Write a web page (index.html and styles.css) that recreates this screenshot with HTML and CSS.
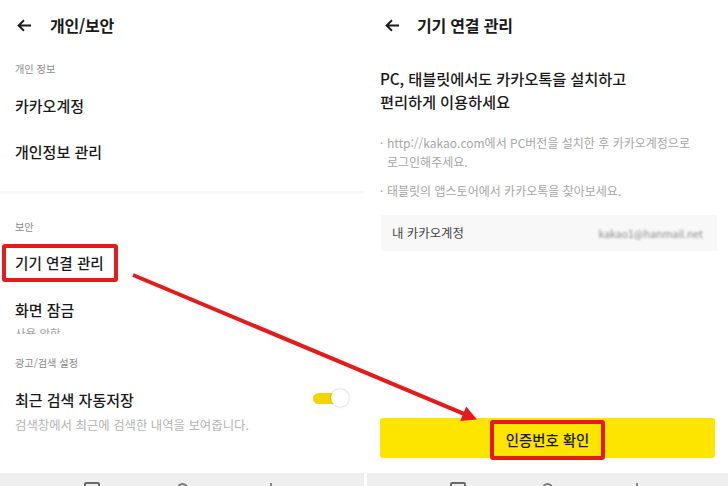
FILE: index.html
```html
<!DOCTYPE html>
<html lang="ko">
<head>
<meta charset="utf-8">
<title>개인/보안 - 기기 연결 관리</title>
<link rel="stylesheet" href="styles.css">
</head>
<body>
<div class="screen">
  <section class="panel panel-left">
    <header class="appbar">
      <svg class="back" viewBox="0 0 15 13" width="15" height="13"><path d="M14 6.5H1.8M7 1.2L1.6 6.5L7 11.8" fill="none" stroke="#1a1a1a" stroke-width="1.9"/></svg>
      <h1 class="title">개인/보안</h1>
    </header>
    <div class="content content-left">
      <p class="label label-first">개인 정보</p>
      <div class="item item-first">카카오계정</div>
      <div class="item">개인정보 관리</div>
      <div class="divider"></div>
      <p class="label label-security">보안</p>
      <div class="item-marked"><span class="mark">기기 연결 관리</span></div>
      <div class="clipped">
        <div class="item-title">화면 잠금</div>
        <div class="item-sub">사용 안함</div>
      </div>
      <p class="label label-ad">광고/검색 설정</p>
      <div class="toggle-row">
        <div class="toggle-text">
          <div class="item-title">최근 검색 자동저장</div>
          <div class="item-desc">검색창에서 최근에 검색한 내역을 보여줍니다.</div>
        </div>
        <span class="switch"><span class="track"></span><span class="knob"></span></span>
      </div>
    </div>
    <nav class="navbar">
      <span class="nav-slot"><span class="nav-recent"></span></span>
      <span class="nav-slot"><span class="nav-home"></span></span>
      <span class="nav-slot"><span class="nav-back"></span></span>
    </nav>
  </section>

  <section class="panel panel-right">
    <header class="appbar appbar-right">
      <svg class="back" viewBox="0 0 15 13" width="15" height="13"><path d="M14 6.5H1.8M7 1.2L1.6 6.5L7 11.8" fill="none" stroke="#1a1a1a" stroke-width="1.9"/></svg>
      <h1 class="title">기기 연결 관리</h1>
    </header>
    <div class="content content-right">
      <p class="headline">PC, 태블릿에서도 카카오톡을 설치하고<br>편리하게 이용하세요</p>
      <ul class="bullets">
        <li><span class="dot">·</span><span>http://kakao.com에서 PC버전을 설치한 후 카카오계정으로 로그인해주세요.</span></li>
        <li><span class="dot">·</span><span>태블릿의 앱스토어에서 카카오톡을 찾아보세요.</span></li>
      </ul>
      <div class="account">
        <span class="account-label">내 카카오계정</span>
        <span class="account-email">kakao1@hanmail.net</span>
      </div>
      <div class="cta"><span class="mark mark-cta">인증번호 확인</span></div>
    </div>
    <nav class="navbar">
      <span class="nav-slot"><span class="nav-recent"></span></span>
      <span class="nav-slot"><span class="nav-home"></span></span>
      <span class="nav-slot"><span class="nav-back"></span></span>
    </nav>
  </section>
</div>

<svg class="arrow" viewBox="0 0 728 486" width="728" height="486">
  <line x1="133" y1="275" x2="464" y2="413.8" stroke="#e31b1b" stroke-width="4"/>
  <polygon points="477,419.5 460.2,421 466.2,406.6" fill="#e31b1b"/>
</svg>
</body>
</html>
```

FILE: styles.css
```css
* {
  box-sizing: border-box;
  margin: 0;
  padding: 0;
}

html, body {
  width: 728px;
  height: 486px;
  overflow: hidden;
  background: #ffffff;
}

body {
  position: relative;
  font-family: "Noto Sans CJK KR", "Noto Sans", sans-serif;
  color: #1a1a1a;
}

.screen {
  display: flex;
  gap: 3px;
  height: 486px;
}

.panel {
  display: flex;
  flex-direction: column;
  height: 486px;
}

.panel-left {
  width: 364px;
}

.panel-right {
  width: 361px;
}

.appbar {
  height: 50px;
  flex: none;
  display: flex;
  align-items: center;
  gap: 18px;
  padding-left: 17px;
}

.appbar-right {
  padding-left: 18px;
  gap: 17px;
}

.back {
  display: block;
  flex: none;
}

.title {
  font-size: 16px;
  font-weight: 700;
  line-height: 20px;
  letter-spacing: -0.2px;
}

.content {
  flex: 1;
  display: flex;
  flex-direction: column;
}

.content-left {
  padding: 0 15px;
}

.label {
  font-size: 10.2px;
  line-height: 22px;
  color: #8a8a8a;
}

.label-first {
  margin-top: 8px;
}

.item {
  height: 46px;
  line-height: 46px;
  font-size: 15px;
  font-weight: 500;
}

.item-first {
  margin-top: 3px;
}

.divider {
  margin: 16px -15px 0;
  height: 3px;
  background: #f7f7f7;
}

.label-security {
  margin-top: 22px;
}

.item-marked {
  margin-top: 3px;
  height: 44px;
  display: flex;
  align-items: center;
}

.mark {
  display: inline-block;
  border: 4px solid #e31b1b;
  border-radius: 3px;
}

.item-marked .mark {
  margin-left: -13px;
  height: 38px;
  padding: 0 10px 0 9px;
  line-height: 30px;
  font-size: 14.6px;
  font-weight: 500;
}

.clipped {
  height: 49px;
  overflow: hidden;
}

.item-title {
  font-size: 15px;
  font-weight: 500;
  line-height: 24px;
}

.clipped .item-title {
  margin-top: 13px;
}

.item-sub {
  font-size: 11.5px;
  line-height: 22px;
  color: #a0a0a0;
}

.label-ad {
  margin-top: 18px;
}

.toggle-row {
  margin-top: 14px;
  display: flex;
  justify-content: space-between;
  align-items: flex-start;
}

.item-desc {
  margin-top: 4px;
  font-size: 12.4px;
  line-height: 18px;
  color: #b3b3b3;
}

.switch {
  position: relative;
  margin-top: 1px;
  width: 36px;
  height: 18px;
  flex: none;
}

.track {
  position: absolute;
  left: 0;
  top: 4px;
  width: 26px;
  height: 11px;
  border-radius: 6px;
  background: #f2d400;
}

.knob {
  position: absolute;
  right: 0;
  top: 0;
  width: 18px;
  height: 18px;
  border-radius: 50%;
  background: #ffffff;
  box-shadow: 0 0 2px rgba(0, 0, 0, 0.3);
}

.navbar {
  flex: none;
  height: 13px;
  background: #efefef;
  display: flex;
  justify-content: center;
  overflow: hidden;
}

.nav-slot {
  width: 90px;
  display: flex;
  justify-content: center;
  padding-top: 9px;
}

.nav-recent {
  width: 16px;
  height: 14px;
  border: 2px solid #6a6a6a;
  border-radius: 2px;
}

.nav-home {
  margin-top: 1px;
  width: 11px;
  height: 11px;
  border: 2px solid #7a7a7a;
  border-radius: 50%;
}

.nav-back {
  margin-top: 1px;
  width: 4px;
  height: 8px;
  border-left: 2px solid #888;
}

.content-right {
  padding: 0 13px;
}

.headline {
  margin-top: 17px;
  font-size: 15.3px;
  line-height: 23px;
  font-weight: 500;
  letter-spacing: -0.1px;
}

.bullets {
  margin-top: 20px;
  list-style: none;
  font-size: 12px;
  line-height: 19px;
  color: #a6a6a6;
  word-break: keep-all;
}

.bullets li {
  display: flex;
}

.bullets li + li {
  margin-top: 10px;
}

.dot {
  width: 7px;
  flex: none;
}

.account {
  margin: 15px -2px 0 1px;
  height: 36px;
  background: #f8f8f8;
  display: flex;
  align-items: center;
  justify-content: space-between;
  padding: 0 14px 0 11px;
}

.account-label {
  font-size: 12.4px;
  color: #444444;
}

.account-email {
  font-size: 10.5px;
  color: #8c8c8c;
  filter: blur(1.2px);
}

.cta {
  margin-top: auto;
  margin-bottom: 15px;
  height: 40px;
  background: #fee500;
  border-radius: 3px;
  display: flex;
  justify-content: center;
  align-items: center;
}

.mark-cta {
  margin-top: 4px;
  height: 40px;
  padding: 0 12px;
  line-height: 32px;
  font-size: 14.4px;
  font-weight: 500;
}

.arrow {
  position: absolute;
  left: 0;
  top: 0;
  pointer-events: none;
}
```
